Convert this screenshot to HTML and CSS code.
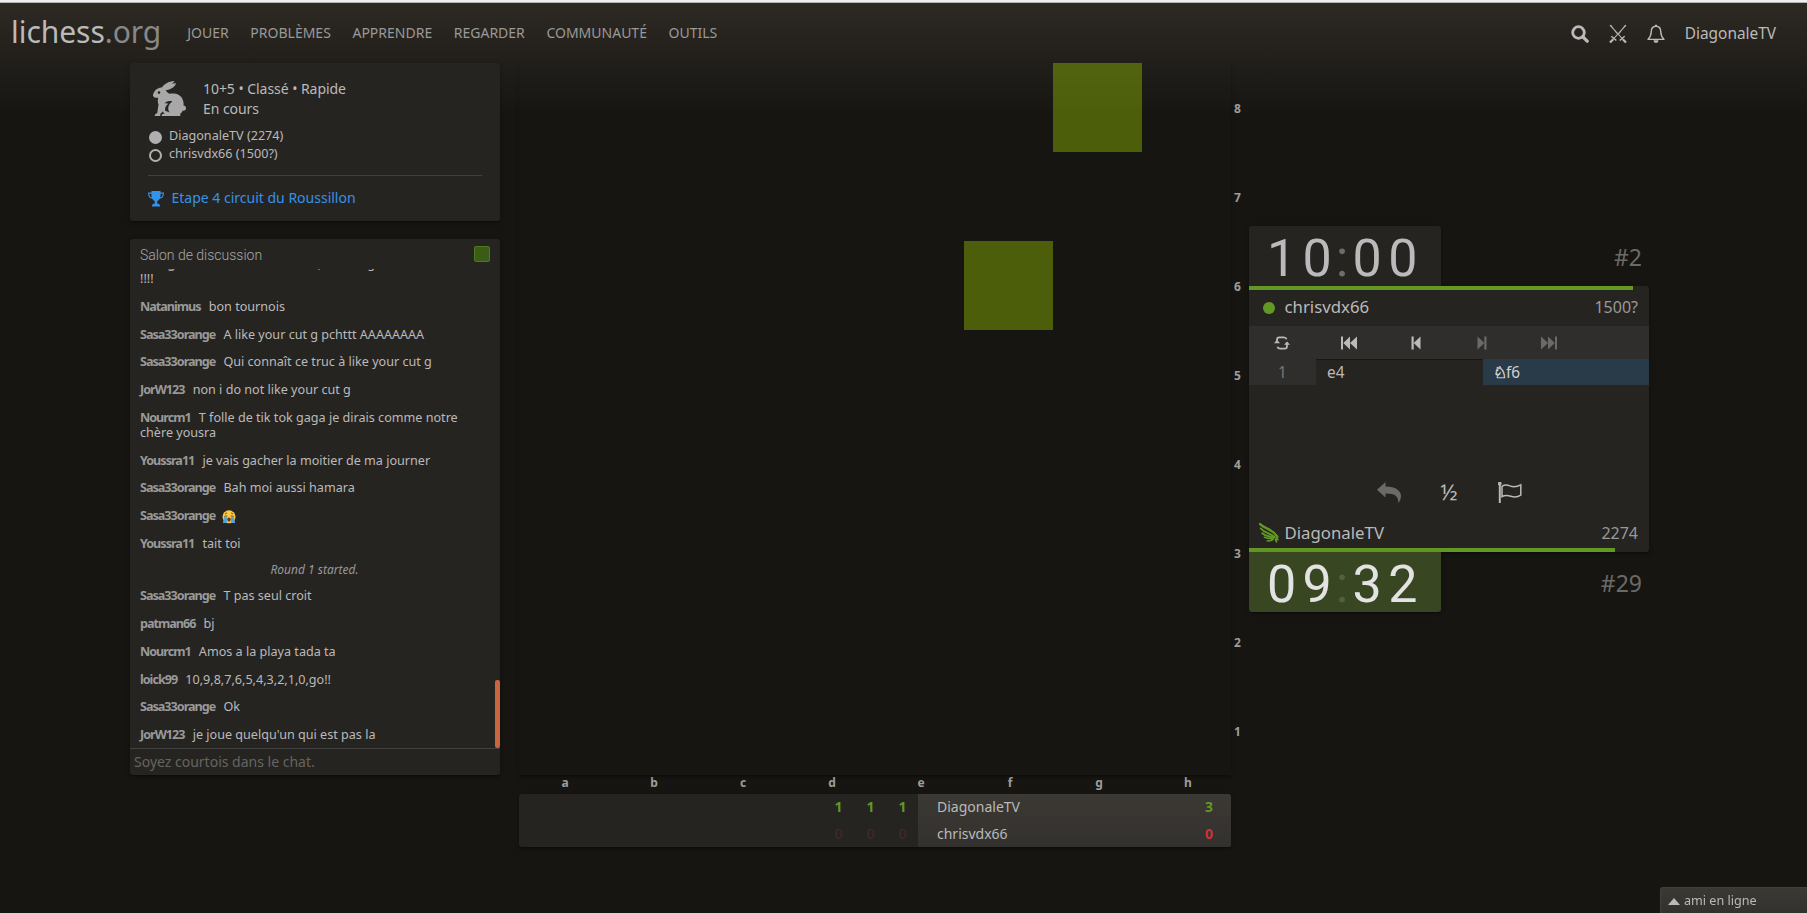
FILE: index.html
```
<!DOCTYPE html>
<html lang="fr">
<head>
    <meta charset="UTF-8">
    <meta name="viewport" content="width=device-width, initial-scale=1.0">
    <title>lichess.org</title>
    <link rel="stylesheet" href="styles.css">
</head>
<body>
    <header id="top">
        <a class="site-title">lichess<span>.org</span></a>
        <nav>
            <a>Jouer</a>
            <a>Problèmes</a>
            <a>Apprendre</a>
            <a>Regarder</a>
            <a>Communauté</a>
            <a>Outils</a>
        </nav>
        <div class="site-buttons">
            <svg class="ico-search" viewBox="0 0 18 18"><circle cx="7.5" cy="7.5" r="5.8" fill="none" stroke="currentColor" stroke-width="2.8"/><path d="M12 12l4.2 4.2" stroke="currentColor" stroke-width="3.2" stroke-linecap="round"/></svg>
            <svg class="ico-swords" viewBox="0 0 18 20" fill="none" stroke="currentColor"><path d="M1 1.2L14.5 16M17 1.2L3.5 16M1.5 1l6.5 8.5M16.5 1L10 9.5" stroke-width="1.1"/><path d="M2.3 12.2l5 4.3M15.7 12.2l-5 4.3" stroke-width="1.5"/><path d="M4 15.5l-3 3M14 15.5l3 3" stroke-width="2.2"/></svg>
            <svg class="ico-bell" viewBox="0 0 18 20"><path d="M9 2.3C5.6 2.3 4.3 4.7 4.2 8c-.1 4-1.1 5.3-3.2 7.4h16c-2.1-2.1-3.1-3.4-3.2-7.4-.1-3.3-1.4-5.7-4.8-5.7z" fill="none" stroke="currentColor" stroke-width="1.4" stroke-linejoin="round"/><path d="M9 .8v1.5" stroke="currentColor" stroke-width="2"/><path d="M6.6 16.2h4.8a2.4 2.6 0 0 1-4.8 0z" fill="currentColor"/></svg>
            <a class="user">DiagonaleTV</a>
        </div>
    </header>
    <main>
        <aside>
            <section class="meta">
                <div class="infos">
                    <svg class="rabbit" viewBox="0 0 33 35"><path fill="currentColor" d="M1.5 10.5C2.5 8.500 6 6.600 9 6.600 10.500 3.500 15.500.4 21.600.1 21 1.300 20 2.200 18.800 3 20.300 2.500 22 2.200 23 2.400 22 5.800 17.500 8.500 12.800 9.100c1 1.500 1.600 3.100 3.700 3.700 5.500-.8 11.500.2 13.500 6.700.7 2 .6 3.600.5 5 1.800.2 2.600 1.500 2.500 3-.1 1.700-1.700 2.500-3.300 2.200-.9 1.500-1.500 2.500-2.700 3.200.8.500.7 1.600-.2 2.100H8.500c.1-1.700 1.300-2.300 3.400-2.200-1.300-.8-1.500-1.500-2-2.500-.7 1.100-1.100 1.400-2.200 2l-.7 2.600H1.900c-.3-1.500.5-2.400 2.300-2.700l1.300-8.700c-.9-2-.9-4-.3-6.700-2.400.2-4.500-.4-5.200-2.100-.1-1.600.5-3 1.500-4.200z"/><circle cx="6" cy="11.6" r="1.3" fill="#262421"/><path d="M19.500 20.400c-3.500-1-7 .2-7.900 2.100 1.900-.5 2.700-.4 3.800.3-2.300 1-3.600 4.300-3.300 6.900l4.700 1.800c-3-3.700-1.400-8.800 2.700-11.100z" fill="#262421"/></svg>
                    <div class="setup">10+5 • Classé • Rapide<br>En cours</div>
                </div>
                <div class="player-line"><i class="disc white"></i>DiagonaleTV (2274)</div>
                <div class="player-line"><i class="disc"></i>chrisvdx66 (1500?)</div>
                <a class="tour">
                    <svg viewBox="0 0 16 16"><path fill="currentColor" d="M3.5 0h9v1.6H16c0 4-1.6 5.9-4.5 6.3-.7 1.2-1.5 1.9-2.3 2.1v2.6c1.7.2 2.7 1 2.900 2.200v.7H3.900v-.7c.2-1.200 1.200-2 2.900-2.200V10c-.8-.2-1.600-.9-2.300-2.100C1.600 7.500 0 5.600 0 1.600h3.500zM1.200 2.800c.2 2.100 1 3.300 2.600 3.800-.3-1.200-.4-2.400-.4-3.800zm13.600 0h-2.200c0 1.400-.1 2.600-.4 3.800 1.600-.5 2.400-1.700 2.600-3.800z"/></svg>Etape 4 circuit du Roussillon
                </a>
            </section>
            <section class="chat">
                <div class="chat-head">Salon de discussion<span class="toggle"></span></div>
                <ol class="messages">
                    <li><b>Young12</b>on se tait et on est la, tous le gars<br>!!!!</li>
                    <li><b>Natanimus</b>bon tournois</li>
                    <li><b>Sasa33orange</b>A like your cut g pchttt AAAAAAAA</li>
                    <li><b>Sasa33orange</b>Qui connaît ce truc à like your cut g</li>
                    <li><b>JorW123</b>non i do not like your cut g</li>
                    <li><b>Nourcm1</b>T folle de tik tok gaga je dirais comme notre chère yousra</li>
                    <li><b>Youssra11</b>je vais gacher la moitier de ma journer</li>
                    <li><b>Sasa33orange</b>Bah moi aussi hamara</li>
                    <li><b>Sasa33orange</b><svg class="emoji" viewBox="0 0 14 14"><circle cx="7" cy="6.8" r="6.5" fill="#fdc840"/><path d="M2.3 6.3l3-.4M8.700 5.900l3 .4M3 4l2-1.200M11 4L9 2.800" stroke="#6b4220" stroke-width=".9"/><path d="M2.300 6.800h2.600V13H1V12zM9.100 6.800h2.600L13 12v1H9.100z" fill="#4fa4dd"/><ellipse cx="7" cy="9.6" rx="1.8" ry="2.1" fill="#6b3a2a"/><path d="M5.800 11h2.400l-1.200.8z" fill="#ef5b5b"/></svg></li>
                    <li><b>Youssra11</b>tait toi</li>
                    <li class="system">Round 1 started.</li>
                    <li><b>Sasa33orange</b>T pas seul croit</li>
                    <li><b>patman66</b>bj</li>
                    <li><b>Nourcm1</b>Amos a la playa tada ta</li>
                    <li><b>loick99</b>10,9,8,7,6,5,4,3,2,1,0,go!!</li>
                    <li><b>Sasa33orange</b>Ok</li>
                    <li><b>JorW123</b>je joue quelqu'un qui est pas la</li>
                </ol>
                <span class="scrollbar"></span>
                <input type="text" placeholder="Soyez courtois dans le chat.">
            </section>
        </aside>

        <div class="center">
            <div class="board-wrap">
                <div class="board">
                    <span class="last-move from"></span>
                    <span class="last-move to"></span>
                </div>
                <div class="ranks"><span>8</span><span>7</span><span>6</span><span>5</span><span>4</span><span>3</span><span>2</span><span>1</span></div>
            </div>
            <div class="files"><span>a</span><span>b</span><span>c</span><span>d</span><span>e</span><span>f</span><span>g</span><span>h</span></div>
            <div class="crosstable">
                <div class="rounds">
                    <div><b>1</b><b>1</b><b>1</b></div>
                    <div class="loss"><span>0</span><span>0</span><span>0</span></div>
                </div>
                <div class="matchup">
                    <div>DiagonaleTV<b class="win">3</b></div>
                    <div>chrisvdx66<b class="lose">0</b></div>
                </div>
            </div>
        </div>

        <div class="table">
            <div class="clock-row">
                <div class="clock">10<i>:</i>00</div>
                <span class="rank">#2</span>
            </div>
            <div class="panel">
                <div class="bar" style="width: 96%"></div>
                <div class="player"><span class="icon"><i class="online"></i></span>chrisvdx66<span class="rating">1500?</span></div>
                <div class="controls">
                    <span><svg viewBox="0 0 16 14"><path d="M3 6V3.700Q3 1.300 5.300 1.300H9.700Q12 1.300 12.600 3.300M13 8v2.300Q13 12.700 10.700 12.700H6.300Q4 12.700 3.400 10.700" fill="none" stroke="currentColor" stroke-width="1.7"/><path d="M0 7.200L3 3.800l3 3.400zM10 8.800L13 5.600l3 3.200z" fill="currentColor"/></svg></span>
                    <span><svg viewBox="0 0 16 14" fill="currentColor"><path d="M0 .5h2v13H0zM9 .5v13L2.300 7zM16 .5v13L9 7z"/></svg></span>
                    <span><svg viewBox="0 0 16 14" fill="currentColor"><path d="M3.500.5h2.200v13H3.500zM12.500.5v13L5.700 7z"/></svg></span>
                    <span class="off"><svg viewBox="0 0 16 14" fill="currentColor"><path d="M12.500.5h-2.200v13h2.200zM3.500.5v13L10.300 7z"/></svg></span>
                    <span class="off"><svg viewBox="0 0 16 14" fill="currentColor"><path d="M16 .5h-2v13h2zM7 .5v13L13.700 7zM0 .5v13L7 7z"/></svg></span>
                    <span></span>
                </div>
                <div class="moves">
                    <span class="index">1</span>
                    <span class="move">e4</span>
                    <span class="move current"><span class="piece">♘</span>f6</span>
                </div>
                <div class="actions">
                    <svg class="undo" viewBox="0 0 24 21"><path fill="currentColor" d="M8.500 0v4.500C18 4.300 24 8.500 24 14c0 3-1.200 5-2.700 7 .3-6.500-3.300-9.600-12.800-9.400v3.900L0 7.800z"/></svg>
                    <span class="half">½</span>
                    <svg class="flag" viewBox="0 0 24 21" fill="none" stroke="currentColor" stroke-width="1.5"><path d="M1.800 1.500V21" stroke-width="2"/><circle cx="1.8" cy="1.6" r="1.1"/><path d="M4 4.300c3-2.200 5.500-1.500 8-.4 3.500 1.400 6.500 1.200 10.800-1.100V13.200c-3.500 2.200-6.500 2.300-10 1.100-3-1.100-5.500-1.600-8.800.3z"/></svg>
                </div>
                <div class="player me"><span class="icon"><svg class="wing" viewBox="0 0 20 20" fill="none" stroke="currentColor" stroke-linecap="round"><path d="M.8.8C5 5.500 13.500 6 17.300 12.600" stroke-width="2.3"/><path d="M1.800 5.500c3.500 4.300 9 4.500 13.500 8.300M3.300 10.200c3.300 3 7.500 3 11.300 4.800" stroke-width="1.9"/><path d="M5.300 14.200c3 1.700 6 1.500 8.700 1.700M8.200 17.800c2.500.3 4.300-.2 5.800-1.100" stroke-width="1.5"/><path d="M17.600 12.500l1.200 1.500M17 14.800l1.800 1.800M16.500 16.500l.9 2.200" stroke-width="1.800"/></svg></span>DiagonaleTV<span class="rating">2274</span></div>
                <div class="bar" style="width: 91.5%"></div>
            </div>
            <div class="clock-row">
                <div class="clock running">09<i>:</i>32</div>
                <span class="rank">#29</span>
            </div>
        </div>
    </main>
    <div class="friends"><i></i>ami en ligne</div>
</body>
</html>
```
FILE: styles.css
```
*{
    margin: 0;
    padding: 0;
    box-sizing: border-box;
}
body{
    height: 913px;
    overflow: hidden;
    border-top: 2px solid #f0f0f0;
    background: #161512 linear-gradient(to bottom, #2e2a24, #161512 116px) no-repeat;
    color: #bababa;
    font: 14px/1.5 "Noto Sans", "Liberation Sans", sans-serif;
}
ol{
    list-style: none;
}
i{
    font-style: normal;
}

/* header */
#top{
    height: 61px;
    display: flex;
    align-items: center;
    border-top: 1px solid #b5b3b0;
    padding: 0 31px 0 11px;
}
.site-title{
    font-size: 30px;
    line-height: 60px;
    margin: -2px 26px 0 0;
    letter-spacing: -.05px;
}
.site-title span{
    color: #888;
}
nav{
    display: flex;
    gap: 21.6px;
    margin-top: -2px;
    text-transform: uppercase;
    color: #999;
}
.site-buttons{
    margin-left: auto;
    display: flex;
    align-items: center;
}
.site-buttons svg{
    width: 18px;
    height: 20px;
    margin: 3px 20px 0 0;
}
.site-buttons .ico-search{
    height: 18px;
}
.user{
    font-size: 15.4px;
    margin-top: 1px;
}

main{
    display: grid;
    grid-template-columns: 370px 712px 400px;
    column-gap: 19px;
    padding-left: 130px;
}
.meta, .chat, .board, .crosstable, .panel, .clock{
    box-shadow: 0 2px 2px 0 rgba(0, 0, 0, .14), 0 3px 1px -2px rgba(0, 0, 0, .2), 0 1px 5px 0 rgba(0, 0, 0, .12);
}

/* game infos */
.meta{
    height: 158px;
    padding: 16px 18px 0;
    background: #262421;
    border-radius: 3px;
}
.infos{
    display: flex;
    line-height: 20px;
    height: 48px;
}
.setup{
    letter-spacing: -.05px;
}
.rabbit{
    width: 33px;
    height: 35px;
    margin: 2px 17px 0 5px;
    color: #a8a8a8;
}
.player-line{
    display: flex;
    align-items: center;
    font-size: 12.6px;
    line-height: 18px;
}
.disc{
    width: 13px;
    height: 13px;
    border: 2px solid #b0b0b0;
    border-radius: 50%;
    margin: 2px 7px 0 1px;
}
.disc.white{
    background: #b0b0b0;
}
.tour{
    display: flex;
    align-items: center;
    margin-top: 12px;
    padding-top: 11px;
    border-top: 1px solid #404040;
    color: #3692e7;
}
.tour svg{
    width: 16px;
    height: 16px;
    margin: 3px 7.5px 0 0;
}

/* chat */
.chat{
    position: relative;
    display: flex;
    flex-direction: column;
    height: 536px;
    margin-top: 18px;
    background: #262421;
    border-radius: 3px;
}
.chat-head{
    display: flex;
    justify-content: space-between;
    height: 30px;
    line-height: 33px;
    padding: 0 10px;
    font-family: Roboto, sans-serif;
    font-weight: 300;
    color: #a8a8a8;
}
.toggle{
    width: 16px;
    height: 16px;
    margin-top: 7px;
    background: #3b5b17;
    border: 1px solid #4d7a1c;
    border-radius: 2px;
}
.messages{
    flex: 1;
    min-height: 0;
    overflow: hidden;
    display: flex;
    flex-direction: column;
    justify-content: flex-end;
    font-size: 12.6px;
    line-height: 1.2;
}
.messages li{
    padding: .53em 20px .47em 10px;
}
.messages b{
    margin-right: 8.2px;
    letter-spacing: -1px;
    color: #999;
}
.messages .system{
    font-size: 12px;
    line-height: 13.6px;
    font-style: italic;
    text-align: center;
    padding: 6px 11px 5.4px 10px;
    color: #999;
}
.emoji{
    width: 14px;
    height: 14px;
    vertical-align: -2px;
    margin: 0 0 -2px -1px;
}
.scrollbar{
    position: absolute;
    right: 0;
    bottom: 27px;
    width: 5px;
    height: 68px;
    background: #c8663e;
    border-radius: 2px;
}
.chat input{
    height: 27px;
    padding: 0 4px 2px;
    border: 0;
    border-top: 1px solid #404040;
    background: none;
    font: inherit;
}
.chat input::placeholder{
    color: #666460;
}

/* board */
.board-wrap{
    position: relative;
    height: 712px;
}
.board{
    display: grid;
    grid-template: repeat(8, 89px) / repeat(8, 89px);
    height: 712px;
}
.last-move{
    background: rgba(155, 199, 0, .41);
}
.from{
    grid-area: 1 / 7;
}
.to{
    grid-area: 3 / 6;
}
.ranks{
    position: absolute;
    top: 0;
    left: 715px;
}
.ranks, .files{
    font-size: 12px;
    font-weight: bold;
    color: #9e9d9b;
}
.ranks span{
    display: block;
    height: 89px;
    line-height: 91px;
}
.files{
    display: flex;
    height: 19px;
    line-height: 15px;
}
.files span{
    width: 89px;
    padding-left: 3px;
    text-align: center;
}

.crosstable{
    display: flex;
    height: 53px;
    line-height: 26.5px;
    background: #262421;
    border-radius: 3px;
    overflow: hidden;
}
.rounds{
    flex: 1;
}
.rounds div{
    display: flex;
    justify-content: flex-end;
    color: #629924;
}
.rounds b, .rounds span{
    width: 32px;
    padding-left: 1px;
    text-align: center;
}
.rounds .loss{
    color: #46282a;
}
.matchup{
    width: 313px;
    padding: 0 18px 0 19px;
    background: linear-gradient(to bottom, #3c3934, #33312e);
}
.matchup div{
    display: flex;
    justify-content: space-between;
}
.win{
    color: #629924;
}
.lose{
    color: #cc3333;
}

/* clocks and moves */
.table{
    padding-top: 163px;
    margin-left: -1px;
    width: 400px;
}
.clock-row{
    display: flex;
    justify-content: space-between;
    align-items: center;
    height: 60px;
    padding-right: 7px;
}
.clock{
    width: 192px;
    height: 60px;
    padding-left: 18px;
    background: #262421;
    border-radius: 3px 3px 0 0;
    font: 52px/65px Roboto, sans-serif;
    letter-spacing: 6.4px;
    white-space: nowrap;
}
.clock i{
    display: inline-block;
    width: 14.3px;
    text-indent: -2.5px;
    letter-spacing: 0;
    color: #6e6d6b;
}
.running{
    background: #384722;
    border-radius: 0 0 3px 3px;
    color: #e3e3e3;
}
.running i{
    color: #53613f;
}
.rank{
    margin-top: 2px;
    font-size: 23px;
    color: #6b6a68;
}
.panel{
    display: flex;
    flex-direction: column;
    height: 266px;
    background: #262421;
    border-radius: 0 3px 3px 0;
}
.bar{
    height: 4px;
    background: #629924;
}
.player{
    display: flex;
    align-items: center;
    height: 36px;
    padding: 0 11px 2px 10px;
    font-size: 16.8px;
}
.me{
    padding: 6px 11px 0 10px;
}
.icon{
    display: flex;
    width: 25.5px;
    color: #629924;
}
.online{
    width: 12px;
    height: 12px;
    margin: 2px 0 0 4px;
    border-radius: 50%;
    background: #629924;
}
.wing{
    width: 20px;
    height: 20px;
}
.rating{
    margin-left: auto;
    font-size: 16px;
    color: #999;
}
.controls{
    display: grid;
    grid-template-columns: repeat(6, 1fr);
    height: 33px;
    background: #302e2d;
}
.controls span{
    display: flex;
    align-items: center;
    justify-content: center;
}
.controls svg{
    width: 16px;
    height: 14px;
}
.controls .off{
    color: #6b6a68;
}
.moves{
    display: flex;
    height: 26px;
    line-height: 27px;
    font-size: 15.4px;
}
.index{
    width: 67px;
    text-align: center;
    background: #302e2d;
    color: #777;
}
.move{
    width: 167px;
    padding-left: 11px;
    box-shadow: inset 0 2px 1px -1px rgba(0, 0, 0, .4);
}
.current{
    width: 166px;
    background: #293a49;
    color: #d0d0d0;
    box-shadow: none;
    display: flex;
}
.piece{
    width: 12px;
    font-family: "DejaVu Sans", sans-serif;
    font-size: 16px;
    text-indent: -1px;
    -webkit-text-stroke: .6px #d0d0d0;
}
.actions{
    flex: 1;
    display: flex;
    justify-content: center;
    align-items: flex-end;
    padding-bottom: 8px;
}
.undo, .flag{
    width: 24px;
    height: 21px;
    margin-bottom: 1px;
}
.undo{
    color: #6b6a68;
}
.half{
    width: 97px;
    text-align: center;
    font-size: 22.4px;
    line-height: 24px;
}

/* online friends */
.friends{
    position: fixed;
    right: 0;
    bottom: 0;
    width: 147px;
    height: 26px;
    display: flex;
    align-items: center;
    padding: 1px 0 0 7px;
    border: 1px solid #404040;
    border-width: 1px 0 0 1px;
    border-radius: 3px 0 0 0;
    background: linear-gradient(to bottom, #3c3934, #33312e);
    font-size: 12.6px;
}
.friends i{
    border: 6px solid transparent;
    border-top: 0;
    border-bottom: 7px solid #bababa;
    margin-right: 4px;
}
```
